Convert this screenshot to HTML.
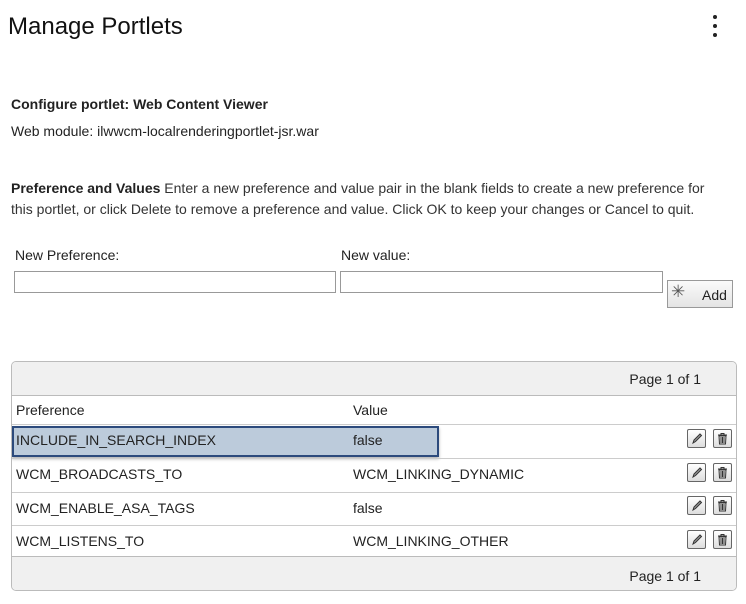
<!DOCTYPE html><html><head><style>
body{margin:0;width:746px;height:604px;background:#fff;font-family:"Liberation Sans",sans-serif;color:#222;position:relative;overflow:hidden}
.a{position:absolute;white-space:nowrap}
.inp{position:absolute;border:1px solid #999;background:#fff;height:22px;box-sizing:border-box}
.ic{position:absolute;width:19px;height:19px;border:1px solid #666;border-radius:2px;background:linear-gradient(#fff,#ddd);box-sizing:border-box}
.ic svg{position:absolute;left:2px;top:2px}
</style></head><body>
<div class="a" style="left:8px;top:13px;font-size:24px;color:#111">Manage Portlets</div>
<div class="a" style="left:713px;top:15px;width:4px;height:4px;border-radius:2px;background:#222"></div>
<div class="a" style="left:713px;top:24px;width:4px;height:4px;border-radius:2px;background:#222"></div>
<div class="a" style="left:713px;top:33px;width:4px;height:4px;border-radius:2px;background:#222"></div>
<div class="a" style="left:11px;top:96px;font-size:14px;font-weight:bold">Configure portlet: Web Content Viewer</div>
<div class="a" style="left:11px;top:123px;font-size:14px">Web module: ilwwcm-localrenderingportlet-jsr.war</div>
<div class="a" style="left:11px;top:178px;font-size:14px;line-height:21px;width:712px;white-space:normal;color:#333"><b style="color:#222">Preference and Values</b> Enter a new preference and value pair in the blank fields to create a new preference for this portlet, or click Delete to remove a preference and value. Click OK to keep your changes or Cancel to quit.</div>
<div class="a" style="left:15px;top:247px;font-size:14px">New Preference:</div>
<div class="a" style="left:341px;top:247px;font-size:14px">New value:</div>
<div class="inp" style="left:14px;top:271px;width:322px"></div>
<div class="inp" style="left:340px;top:271px;width:323px"></div>
<div class="a" style="left:667px;top:280px;width:66px;height:28px;border:1px solid #999;background:linear-gradient(#fafafa,#e4e4e4);box-sizing:border-box;font-size:14px"><span style="position:absolute;left:3px;top:1px;font-size:17px;color:#555">✳</span><span style="position:absolute;left:34px;top:6px">Add</span></div>
<div class="a" style="left:11px;top:361px;width:726px;height:230px;border:1px solid #bbb;border-radius:5px;box-sizing:border-box;overflow:hidden">
<div style="position:absolute;left:0;top:0;right:0;height:33px;background:#f0f0f0;border-bottom:1px solid #bbb"></div>
<div class="a" style="right:35px;top:9px;font-size:14px">Page 1 of 1</div>
<div class="a" style="left:4px;top:40px;font-size:14px">Preference</div>
<div class="a" style="left:341px;top:40px;font-size:14px">Value</div>
<div style="position:absolute;left:0;right:0;top:62px;border-top:1px solid #ccc"></div>
<div style="position:absolute;left:0;top:64px;width:427px;height:31px;background:#bccbdb;border:2px solid #2c4a7c;box-sizing:border-box;box-shadow:0 2px 3px rgba(0,0,0,.3)"></div>
<div style="position:absolute;left:0;right:0;top:96px;border-top:1px solid #ccc"></div>
<div style="position:absolute;left:0;right:0;top:130px;border-top:1px solid #ccc"></div>
<div style="position:absolute;left:0;right:0;top:163px;border-top:1px solid #ccc"></div>
<div style="position:absolute;left:0;right:0;bottom:0;height:33px;background:#f0f0f0;border-top:1px solid #bbb"></div>
<div class="a" style="right:35px;top:206px;font-size:14px">Page 1 of 1</div>
<div class="a" style="left:4px;top:70px;font-size:14px">INCLUDE_IN_SEARCH_INDEX</div><div class="a" style="left:341px;top:70px;font-size:14px">false</div>
<div class="a" style="left:4px;top:104px;font-size:14px">WCM_BROADCASTS_TO</div><div class="a" style="left:341px;top:104px;font-size:14px">WCM_LINKING_DYNAMIC</div>
<div class="a" style="left:4px;top:138px;font-size:14px">WCM_ENABLE_ASA_TAGS</div><div class="a" style="left:341px;top:138px;font-size:14px">false</div>
<div class="a" style="left:4px;top:171px;font-size:14px">WCM_LISTENS_TO</div><div class="a" style="left:341px;top:171px;font-size:14px">WCM_LINKING_OTHER</div>
</div>
<div class="ic" style="left:687px;top:429px"><svg width="13" height="13"><path d="M3 11 L4 8 L10 2 L11.5 3.5 L5.5 9.5 Z" fill="#999" stroke="#333"/></svg></div><div class="ic" style="left:713px;top:429px"><svg width="13" height="13"><path d="M2 3H11M5 3V1.5H8V3M3 4H10L9.5 12H3.5Z M5 5V11M6.5 5V11M8 5V11" fill="none" stroke="#333"/></svg></div>
<div class="ic" style="left:687px;top:463px"><svg width="13" height="13"><path d="M3 11 L4 8 L10 2 L11.5 3.5 L5.5 9.5 Z" fill="#999" stroke="#333"/></svg></div><div class="ic" style="left:713px;top:463px"><svg width="13" height="13"><path d="M2 3H11M5 3V1.5H8V3M3 4H10L9.5 12H3.5Z M5 5V11M6.5 5V11M8 5V11" fill="none" stroke="#333"/></svg></div>
<div class="ic" style="left:687px;top:496px"><svg width="13" height="13"><path d="M3 11 L4 8 L10 2 L11.5 3.5 L5.5 9.5 Z" fill="#999" stroke="#333"/></svg></div><div class="ic" style="left:713px;top:496px"><svg width="13" height="13"><path d="M2 3H11M5 3V1.5H8V3M3 4H10L9.5 12H3.5Z M5 5V11M6.5 5V11M8 5V11" fill="none" stroke="#333"/></svg></div>
<div class="ic" style="left:687px;top:530px"><svg width="13" height="13"><path d="M3 11 L4 8 L10 2 L11.5 3.5 L5.5 9.5 Z" fill="#999" stroke="#333"/></svg></div><div class="ic" style="left:713px;top:530px"><svg width="13" height="13"><path d="M2 3H11M5 3V1.5H8V3M3 4H10L9.5 12H3.5Z M5 5V11M6.5 5V11M8 5V11" fill="none" stroke="#333"/></svg></div>
</body></html>
